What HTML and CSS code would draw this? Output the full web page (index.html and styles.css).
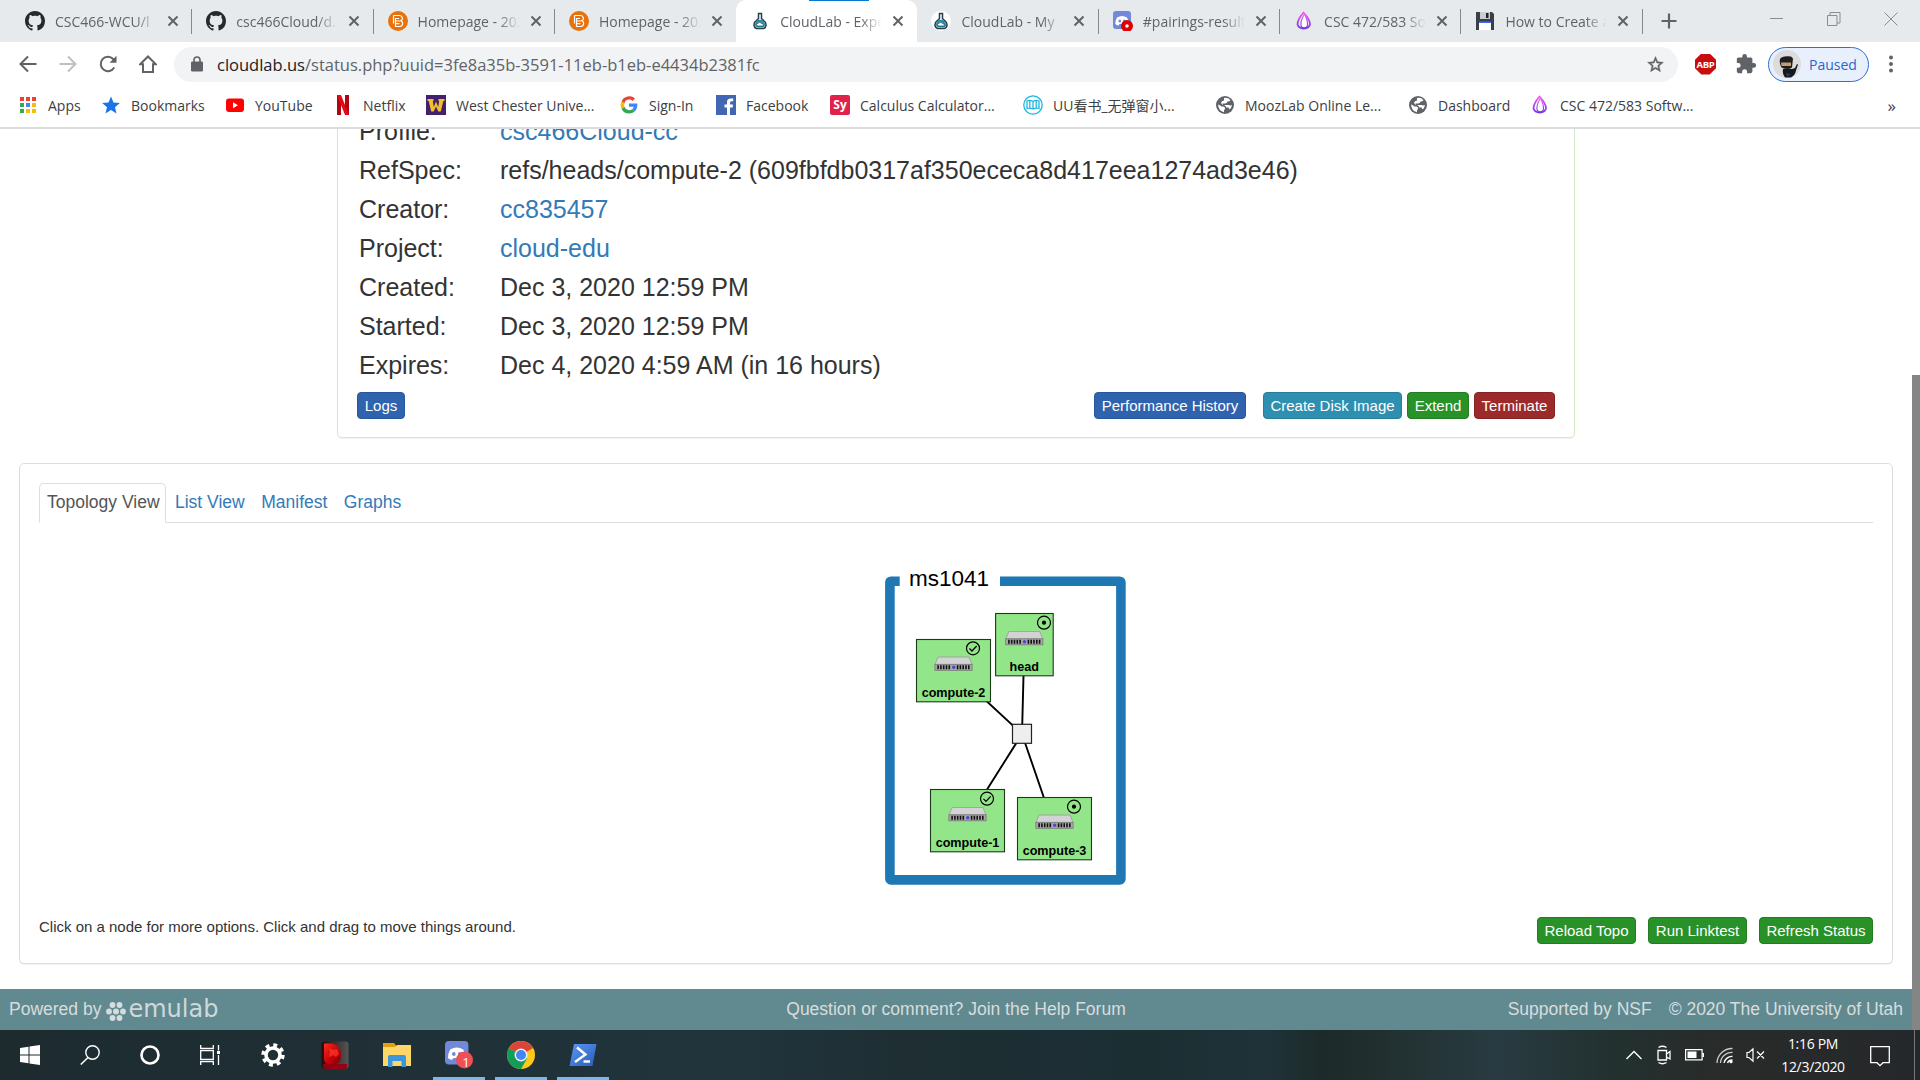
FILE: index.html
```html
<!DOCTYPE html>
<html lang="en">
<head>
<meta charset="utf-8">
<title>CloudLab - Experiment Status</title>
<link rel="stylesheet" href="styles.css">
</head>
<body>
<svg class="defs" width="0" height="0">
  <defs>
    <linearGradient id="dropg" x1="0" y1="0" x2="0" y2="1"><stop offset="0" stop-color="#f25cf0"/><stop offset="1" stop-color="#7a35e8"/></linearGradient>
    <linearGradient id="redg" x1="0" y1="0" x2="1" y2="1"><stop offset="0" stop-color="#ff2a20"/><stop offset=".6" stop-color="#c00008"/><stop offset="1" stop-color="#700"/></linearGradient>
    <linearGradient id="darkg" x1="0" y1="0" x2="1" y2="0"><stop offset="0" stop-color="#2a0a0a"/><stop offset="1" stop-color="#555"/></linearGradient>
    <linearGradient id="psg" x1="0" y1="0" x2="1" y2="1"><stop offset="0" stop-color="#5a96f5"/><stop offset="1" stop-color="#2a5db8"/></linearGradient>
    <symbol id="github" viewBox="0 0 16 16"><path fill="#24292e" d="M8 0C3.58 0 0 3.58 0 8c0 3.54 2.29 6.53 5.47 7.59.4.07.55-.17.55-.38 0-.19-.01-.82-.01-1.49-2.01.37-2.53-.49-2.69-.94-.09-.23-.48-.94-.82-1.13-.28-.15-.68-.52-.01-.53.63-.01 1.08.58 1.23.82.72 1.21 1.87.87 2.33.66.07-.52.28-.87.51-1.07-1.78-.2-3.64-.89-3.64-3.95 0-.87.31-1.59.82-2.15-.08-.2-.36-1.02.08-2.12 0 0 .67-.21 2.2.82.64-.18 1.32-.27 2-.27s1.36.09 2 .27c1.53-1.04 2.2-.82 2.2-.82.44 1.1.16 1.92.08 2.12.51.56.82 1.27.82 2.15 0 3.07-1.87 3.75-3.65 3.95.29.25.54.73.54 1.48 0 1.07-.01 1.93-.01 2.2 0 .21.15.46.55.38A8.01 8.01 0 0 0 16 8c0-4.42-3.58-8-8-8z"/></symbol>
    <symbol id="brand" viewBox="0 0 20 20"><circle cx="10" cy="10" r="10" fill="#e8710a"/><path d="M5.5 4.5h6a2.7 2.7 0 0 1 1.2 5.2 3 3 0 0 1-.9 5.8H7.500V7.500h3.500M5.500 4.500v8M7.500 10h4.500M7.500 12.700h4" fill="none" stroke="#fff" stroke-width="1.200"/></symbol>
    <symbol id="flask" viewBox="0 0 20 20"><circle cx="10" cy="10" r="10" fill="#fff"/><path d="M7.800 2.500h4.400M8.500 2.500v5L4.600 11.500q-1.800 4.500 1.800 6h7.200q3.600-1.500 1.800-6L11.500 7.500v-5z" fill="#fff" stroke="#25404a" stroke-width="1.500"/><path d="M7.800 8.800h4.400l2.500 3.500q1 3.200-1.400 4.300H6.700q-2.400-1.100-1.400-4.300z" fill="#258fb0"/><path d="M7 15q-1.300-1.800.6-2.500 2-2.300 4.200 0 2.400.4 1.500 2.500z" fill="#fff" stroke="#25404a" stroke-width=".7"/></symbol>
    <symbol id="discord" viewBox="0 0 20 20"><rect width="18" height="18" rx="3" fill="#7289da"/><path d="M4 6.500Q9 3.500 14 6.500q2 3 1.700 6.500-2 1.500-3.200 1.500L11.500 13h-5l-1 1.500q-1.500 0-3.200-1.500Q2.300 9.500 4 6.500z" fill="#fff"/><ellipse cx="6.800" cy="10" rx="1.400" ry="1.600" fill="#7289da"/><ellipse cx="11.300" cy="10" rx="1.400" ry="1.600" fill="#7289da"/></symbol>
    <symbol id="drop" viewBox="0 0 20 20"><path d="M9.500 1.500Q3.500 8.500 3.500 13.500a6.500 5.500 0 0 0 12.500 0Q16 8.500 9.500 1.500z" fill="none" stroke="url(#dropg)" stroke-width="1.800"/><path d="M10.500 3q-3.800 6.500-3.600 10.500a3.300 3.300 0 0 0 6.600 0Q13.600 9 10.500 3z" fill="#fff" stroke="url(#dropg)" stroke-width="1.100"/></symbol>
    <symbol id="globe" viewBox="0 0 20 20"><circle cx="10" cy="10" r="9" fill="#5f6368"/><path d="M3 9.500q2 .5 3.500 2h2q2 .5 1.500 2.500-1.500 1-1 3.200Q3.500 16 3 9.500zM9 3q4-.8 6.500 2.200-1.500 1.700-3 1.300-.5 2-2.500 2H7.500l.500 1.500h5.500q1.500.8 3.500 0-.5 3-2.500 4.500l-1-2h-2.200q-.8-2.800-3.800-2.800L6 8q.5-2.500 3-2.500z" fill="#fff"/></symbol>
    <symbol id="x" viewBox="0 0 12 12"><path d="M1.500 1.500l9 9M10.500 1.500l-9 9" stroke="#5f6368" stroke-width="2" fill="none"/></symbol>
    <symbol id="server" viewBox="0 0 38 15" overflow="visible"><path d="M3.500 .5h31L37.500 8H.5z" fill="#d3d3d6" stroke="#9a9a9a" stroke-width=".8"/><rect x=".4" y="7.800" width="37.200" height="6" fill="#a8a8a8" stroke="#777" stroke-width=".8"/><path d="M2.800 10.800H16.500M22.300 10.800h13" stroke="#111" stroke-width="4" stroke-dasharray="1.600 1.200"/><circle cx="19.200" cy="10.800" r="1.700" fill="#4548d8"/></symbol>
    <symbol id="ready" viewBox="-8 -8 16 16"><circle r="6.500" fill="none" stroke="#000" stroke-width="1.200"/><path d="M-3.500 .2l2.500 2.500 4.700-5" fill="none" stroke="#000" stroke-width="1.300"/></symbol>
    <symbol id="booted" viewBox="-8 -8 16 16"><circle r="6.500" fill="none" stroke="#000" stroke-width="1.200"/><circle r="2.100"/></symbol>
  </defs>
</svg>

<div class="screen">
  <header class="browser">
    <div class="strip">
      <div class="accent"></div>
      <div class="tab"><svg class="fav"><use href="#github"/></svg><span class="title t0">CSC466-WCU/l</span><svg class="close"><use href="#x"/></svg></div>
      <div class="tab"><svg class="fav"><use href="#github"/></svg><span class="title t1">csc466Cloud/d.</span><svg class="close"><use href="#x"/></svg></div>
      <div class="tab"><svg class="fav"><use href="#brand"/></svg><span class="title">Homepage - 202</span><svg class="close"><use href="#x"/></svg></div>
      <div class="tab bare"><svg class="fav"><use href="#brand"/></svg><span class="title">Homepage - 202</span><svg class="close"><use href="#x"/></svg></div>
      <div class="tab active"><svg class="fav"><use href="#flask"/></svg><span class="title">CloudLab - Expe</span><svg class="close"><use href="#x"/></svg></div>
      <div class="tab"><svg class="fav"><use href="#flask"/></svg><span class="title">CloudLab - My</span><svg class="close"><use href="#x"/></svg></div>
      <div class="tab"><svg class="fav" viewBox="0 0 20 20"><use href="#discord" width="20" height="20"/><circle cx="14" cy="15" r="6" fill="#e00000"/><circle cx="14" cy="15" r="1.800" fill="#fff"/></svg><span class="title">#pairings-result</span><svg class="close"><use href="#x"/></svg></div>
      <div class="tab"><svg class="fav"><use href="#drop"/></svg><span class="title">CSC 472/583 Sof</span><svg class="close"><use href="#x"/></svg></div>
      <div class="tab"><svg class="fav" viewBox="0 0 20 20"><path d="M1 1h16l2 2v16H1z" fill="#3b3f48"/><path d="M5 1h10v7H5z" fill="#c9ccd2"/><path d="M11 2h2.500v5H11z" fill="#222"/><path d="M4 11h12v8H4z" fill="#fff"/><path d="M4 10.500h12v1.500H4z" fill="#3d6ee8"/></svg><span class="title">How to Create a</span><svg class="close"><use href="#x"/></svg></div>
      <svg class="plus" viewBox="0 0 16 16"><path d="M8 .5v15M.5 8h15" stroke="#5f6368" stroke-width="2.200"/></svg>
      <div class="wincontrols">
        <svg width="14" height="14"><path d="M0 6.500h13" stroke="#8a8c8e"/></svg>
        <svg width="14" height="14"><path d="M.5 3.500h9.500v10H.5zM3 3.500v-3h10v10.500h-3" fill="none" stroke="#8a8c8e"/></svg>
        <svg width="14" height="14"><path d="M.5 .5l13 13M13.500 .5l-13 13" stroke="#8a8c8e"/></svg>
      </div>
    </div>

    <div class="toolbar">
      <svg width="18" height="18" viewBox="0 0 18 18"><path d="M17.500 9H2M9 1.500L1.500 9 9 16.500" fill="none" stroke="#5f6368" stroke-width="2"/></svg>
      <svg width="18" height="18" viewBox="0 0 18 18"><path d="M.5 9H16M9 1.500L16.500 9 9 16.500" fill="none" stroke="#bdbfc2" stroke-width="2"/></svg>
      <svg width="18" height="18" viewBox="0 0 18 18"><path d="M15.200 12.500A7.200 7.200 0 1 1 14.200 4L16 5.800" fill="none" stroke="#5f6368" stroke-width="2"/><path d="M17.500 .8v7H10.500z" fill="#5f6368"/></svg>
      <svg width="18" height="18" viewBox="0 0 18 18"><path d="M1.200 9.200L9 1.500l7.800 7.700H14v7.800H4V9.200z" fill="none" stroke="#5f6368" stroke-width="2"/></svg>
      <div class="omnibox">
        <svg width="12" height="16" viewBox="0 0 12 16"><rect y="5.500" width="12" height="10" rx="1.300" fill="#5f6368"/><path d="M3 6V4a3 3 0 0 1 6 0v2" fill="none" stroke="#5f6368" stroke-width="1.600"/></svg>
        <span class="url"><b>cloudlab.us</b>/status.php?uuid=3fe8a35b-3591-11eb-b1eb-e4434b2381fc</span>
        <svg width="19" height="19" viewBox="0 0 24 24"><path d="M22 9.240l-7.190-.62L12 2 9.190 8.630 2 9.240l5.460 4.730L5.820 21 12 17.270 18.180 21l-1.630-7.030L22 9.240zM12 15.400l-3.760 2.270 1-4.280-3.320-2.880 4.380-.38L12 6.100l1.710 4.040 4.380.38-3.320 2.880 1 4.280L12 15.400z" fill="#5f6368" stroke="#5f6368" stroke-width=".6"/></svg>
      </div>
      <div class="abp">ABP</div>
      <svg class="puzzle" width="22" height="22" viewBox="0 0 24 24"><path fill="#5f6368" d="M20.500 11H19V7c0-1.100-.9-2-2-2h-4V3.500a2.500 2.500 0 0 0-5 0V5H4c-1.100 0-2 .9-2 2v3.800h1.500a2.700 2.700 0 0 1 0 5.400H2V20c0 1.100.9 2 2 2h3.800v-1.500a2.700 2.700 0 0 1 5.400 0V22H17c1.100 0 2-.9 2-2v-4h1.500a2.500 2.500 0 0 0 0-5z"/></svg>
      <div class="profile"><svg width="28" height="28" viewBox="0 0 28 28"><circle cx="14" cy="14" r="14" fill="#dcdcdc"/><path d="M7 9Q9 5.500 18 6.500l2 2-1 9q-4 3-10.500 0Q6 13 7 9z" fill="#1e1e20"/><path d="M8 12.500h10v3.500H8.500z" fill="#c89a72"/><path d="M10 19h9l3-1 2-4 1 .5-2 6q-1 5-5 7h-6q-3-4-2-8.500z" fill="#17181c"/><path d="M13 23l5 1.500-4 2z" fill="#2c3d67"/></svg><span>Paused</span></div>
      <svg class="dots" width="6" height="18" viewBox="0 0 6 18"><g fill="#5f6368"><circle cx="3" cy="2.500" r="2"/><circle cx="3" cy="9" r="2"/><circle cx="3" cy="15.500" r="2"/></g></svg>
    </div>

    <nav class="bookmarks">
      <div class="bm apps"><svg viewBox="0 0 20 20"><g fill="#ea4335"><path d="M2 2h4v4H2zM8 2h4v4H8zM14 2h4v4h-4z"/></g><path d="M2 8h4v4H2zM2 14h4v4H2z" fill="#34a853"/><path d="M8 8h4v4H8z" fill="#4285f4"/><path d="M14 8h4v4h-4zM8 14h4v4H8zM14 14h4v4h-4z" fill="#fbbc05"/></svg><span>Apps</span></div>
      <div class="bm starred"><svg viewBox="0 0 20 20"><path d="M10 1.500l2.500 6 6.300.5-4.800 4.200 1.500 6.300L10 15.100 4.500 18.500 6 12.200 1.200 8l6.300-.5z" fill="#1a73e8"/></svg><span>Bookmarks</span></div>
      <div class="bm yt"><svg viewBox="0 0 20 20"><rect x="1" y="3.500" width="18" height="13.500" rx="3" fill="#f00"/><path d="M8 7.200l5 3-5 3z" fill="#fff"/></svg><span>YouTube</span></div>
      <div class="bm nf"><svg viewBox="0 0 20 20"><path d="M4 0h4v20H4zM12 0h4v20h-4z" fill="#b00610"/><path d="M4 0h4l8 20h-4z" fill="#e50914"/></svg><span>Netflix</span></div>
      <div class="bm wcu"><svg viewBox="0 0 20 20"><rect width="20" height="20" fill="#43206b"/><path d="M1.500 4h6v2H6.800l1 6L10 6.500 12.200 12l1-6h-.7V4h6v2h-1.200l-2.500 10.500h-2.500L10 11.500l-2.300 5H5.200L2.700 6H1.500z" fill="#f3bf2f"/></svg><span>West Chester Unive...</span></div>
      <div class="bm goog"><svg viewBox="0 0 48 48"><path fill="#EA4335" d="M24 11c3.300 0 6.200 1.200 8.500 3.300l5.800-5.800A20 20 0 0 0 6.200 15l6.800 5.200A11.600 11.600 0 0 1 24 11z"/><path fill="#4285F4" d="M44 24.500c0-1.500-.1-2.600-.4-3.900H24v7.600h11.200c-.5 2.600-2 4.900-4.300 6.400l6.600 5.100C41.500 36 44 30.700 44 24.500z"/><path fill="#FBBC05" d="M13 28.200a12 12 0 0 1 0-8L6.200 15a20 20 0 0 0 0 18.400z"/><path fill="#34A853" d="M24 44.500c5.400 0 10-1.800 13.500-4.800l-6.600-5.100A12.400 12.400 0 0 1 13 28.200l-6.800 5.200A20 20 0 0 0 24 44.500z"/></svg><span>Sign-In</span></div>
      <div class="bm fb"><svg viewBox="0 0 20 20"><rect width="20" height="20" fill="#4267b2"/><path d="M11 20v-7.500H8.500v-3H11V7.200Q11 3.500 14.800 3.500h2.400v2.800h-1.700q-1.500 0-1.500 1.500v1.700h3l-.4 3H14V20z" fill="#fff"/></svg><span>Facebook</span></div>
      <div class="bm sy"><i>Sy</i><span>Calculus Calculator...</span></div>
      <div class="bm uu"><svg viewBox="0 0 20 20"><circle cx="10" cy="10" r="9.200" fill="#fff" stroke="#1fb6e0" stroke-width="1.300"/><path d="M10 6.500Q7 4.500 4 6v7.500q3-1 6 .5 3-1.500 6-.5V6q-3-1.500-6 .5zM10 6.500V14M6.800 5.500V13M13.200 5.500V13" fill="none" stroke="#1fb6e0" stroke-width="1.300"/></svg><span>UU看书_无弹窗小...</span></div>
      <div class="bm mooz"><svg><use href="#globe"/></svg><span>MoozLab Online Le...</span></div>
      <div class="bm dash"><svg><use href="#globe"/></svg><span>Dashboard</span></div>
      <div class="bm csc"><svg><use href="#drop"/></svg><span>CSC 472/583 Softw...</span></div>
      <div class="more">»</div>
    </nav>
  </header>

  <main class="viewport">
    <section class="panel info">
      <dl>
        <dt>Profile:</dt><dd><a>csc466Cloud-cc</a></dd>
        <dt>RefSpec:</dt><dd>refs/heads/compute-2 (609fbfdb0317af350ececa8d417eea1274ad3e46)</dd>
        <dt>Creator:</dt><dd><a>cc835457</a></dd>
        <dt>Project:</dt><dd><a>cloud-edu</a></dd>
        <dt>Created:</dt><dd>Dec 3, 2020 12:59 PM</dd>
        <dt>Started:</dt><dd>Dec 3, 2020 12:59 PM</dd>
        <dt>Expires:</dt><dd>Dec 4, 2020 4:59 AM (in 16 hours)</dd>
      </dl>
      <div class="actions">
        <button class="btn primary logs">Logs</button>
        <button class="btn primary history">Performance History</button>
        <button class="btn teal">Create Disk Image</button>
        <button class="btn green">Extend</button>
        <button class="btn red">Terminate</button>
      </div>
    </section>

    <section class="panel topo">
      <ul class="views"><li class="on">Topology View</li><li>List View</li><li>Manifest</li><li>Graphs</li></ul>
      <svg class="graph" viewBox="880 560 260 330" width="260" height="330">
        <path d="M899.700 581.200H891Q889.900 581.200 889.900 582.300V878.700Q889.900 879.900 891 879.900H1119.700Q1120.900 879.900 1120.900 878.700V582.300Q1120.900 581.200 1119.700 581.200H1000" fill="none" stroke="#1f77b4" stroke-width="9.600" stroke-linejoin="round"/>
        <text x="909" y="586" class="site" textLength="80">ms1041</text>
        <g stroke="#000" stroke-width="1.900">
          <path d="M1022 734L1024.300 645M1022 734L953.500 670.500M1022 734L967.500 820.500M1022 734L1054.500 828.500"/>
        </g>
        <rect x="1012.500" y="724.300" width="19" height="19" fill="#eee" stroke="#222" stroke-width="1.200"/>
        <g class="node" transform="translate(1024.300 613.500)"><rect x="-28.700" width="57.600" height="62.300"/><use href="#server" x="-19" y="17.500" width="38" height="15"/><use href="#booted" x="11.700" y="1.200" width="16" height="16"/><text y="57.300">head</text></g>
        <g class="node" transform="translate(953.500 639.500)"><rect x="-37" width="74" height="62.300"/><use href="#server" x="-19" y="17" width="38" height="15"/><use href="#ready" x="11.500" y=".8" width="16" height="16"/><text y="57.300">compute-2</text></g>
        <g class="node" transform="translate(967.500 789.500)"><rect x="-37" width="74" height="62.300"/><use href="#server" x="-19" y="17.500" width="38" height="15"/><use href="#ready" x="11.500" y="1.200" width="16" height="16"/><text y="57.300">compute-1</text></g>
        <g class="node" transform="translate(1054.500 797.500)"><rect x="-37" width="74" height="62.300"/><use href="#server" x="-19" y="17" width="38" height="15"/><use href="#booted" x="11.500" y="1.200" width="16" height="16"/><text y="57.300">compute-3</text></g>
      </svg>
      <div class="bottom">
        <p>Click on a node for more options. Click and drag to move things around.</p>
        <button class="btn green">Reload Topo</button>
        <button class="btn green">Run Linktest</button>
        <button class="btn green">Refresh Status</button>
      </div>
    </section>

    <footer>
      <div class="powered">Powered by
        <svg width="20" height="19" viewBox="0 0 20 19"><g fill="#d5dcde"><circle cx="10" cy="9.500" r="3"/><circle cx="3" cy="9.500" r="2.900"/><circle cx="17" cy="9.500" r="2.900"/><circle cx="6.500" cy="3" r="2.900"/><circle cx="13.500" cy="3" r="2.900"/><circle cx="6.500" cy="16" r="2.900"/><circle cx="13.500" cy="16" r="2.900"/></g></svg>
        <span class="emulab">emulab</span>
      </div>
      <div class="question">Question or comment? Join the Help Forum</div>
      <div class="credits"><span>Supported by NSF</span><span>© 2020 The University of Utah</span></div>
    </footer>
    <div class="scrollbar"></div>
  </main>

  <div class="taskbar">
    <div class="slot"><svg width="20" height="20" viewBox="0 0 20 20"><path d="M0 3l8.500-1.300v7.800H0zM9.500 1.500L20 0v9.500H9.500zM0 10.500h8.500v7.800L0 17zM9.500 10.500H20V20L9.500 18.500z" fill="#fff"/></svg></div>
    <div class="slot"><svg width="20" height="20" viewBox="0 0 20 20"><circle cx="12.500" cy="7.500" r="6.700" fill="none" stroke="#fff" stroke-width="1.400"/><path d="M8 12.500L.8 19.500" stroke="#fff" stroke-width="1.500"/></svg></div>
    <div class="slot"><svg width="20" height="20" viewBox="0 0 20 20"><circle cx="10" cy="10" r="8.500" fill="none" stroke="#fff" stroke-width="2.600"/></svg></div>
    <div class="slot"><svg width="20" height="20" viewBox="0 0 20 20"><path d="M.7 0v3.500h12.600V0M.7 20v-3.500h12.600V20M.7 5.700h12.600v8.600H.7zM18.500 0v5.500M18.500 10v10" fill="none" stroke="#fff" stroke-width="1.300"/><path d="M17 6h3v3h-3z" fill="#fff"/></svg></div>
    <div class="slot app"><svg width="24" height="24" viewBox="0 0 24 24"><circle cx="12" cy="12" r="7" fill="none" stroke="#fff" stroke-width="3.600"/><circle cx="12" cy="12" r="9.700" fill="none" stroke="#fff" stroke-width="4" stroke-dasharray="3.800 3.818"/></svg></div>
    <div class="slot app"><svg width="28" height="28" viewBox="0 0 28 28"><rect x=".5" y=".5" width="27" height="27" rx="3" fill="url(#darkg)"/><path d="M2 23h24v3q-1 2-3 2H5q-3 0-3-3z" fill="#960010"/><path d="M3 2.500h8q9 2 9 11.500 0 7-5 9H6Q3 21 3 17z" fill="url(#redg)"/><path d="M8 7l4 2 4-1 2 5-3 3-3-2-4 2 1-5z" fill="#ff3a2a" opacity=".7"/></svg></div>
    <div class="slot app"><svg width="28" height="24" viewBox="0 0 28 24"><path d="M0 0h11l2.500 3H27v6H0z" fill="#e0a011"/><path d="M0 4h12l2-2h14v21H0z" fill="#ffd766"/><path d="M5 24V14q0-2 2-2h14q2 0 2 2v10h-4.500v-6h-9v6z" fill="#3a96dd"/></svg></div>
    <div class="slot app running"><svg width="28" height="28" viewBox="0 0 28 28"><use href="#discord" width="26" height="26"/><circle cx="19.500" cy="19" r="8.500" fill="#f04f55"/></svg><span class="badge">1</span></div>
    <div class="slot app running"><svg width="28" height="28" viewBox="0 0 28 28"><circle cx="14" cy="14" r="14" fill="#fbc81c"/><path d="M14 14L1.900 7A14 14 0 0 1 26.100 7z" fill="#db4437"/><path d="M14 14L1.900 7A14 14 0 0 0 14 28L20 17.500z" fill="#0f9d58"/><circle cx="14" cy="14" r="6.500" fill="#f1f1f1"/><circle cx="14" cy="14" r="5" fill="#4285f4"/></svg></div>
    <div class="slot app running"><svg width="28" height="22" viewBox="0 0 28 22"><path d="M5 0h22.500L23.500 22H.5z" fill="url(#psg)"/><path d="M8 3.500l8.500 7L6 18" fill="none" stroke="#fff" stroke-width="2.400"/><path d="M14.500 17.500H21" stroke="#fff" stroke-width="2.400"/></svg></div>
    <div class="tray">
      <svg width="18" height="16" viewBox="0 0 18 16"><path d="M1.500 12L9 4.500 16.500 12" fill="none" stroke="#fff" stroke-width="1.400"/></svg>
      <svg width="18" height="20" viewBox="0 0 18 20"><path d="M3 5.500h8.500v9.500H3zM11.500 9l3.500-2.500v7.500L11.500 12M3.500 2.500q4-2.500 8 0M3.500 17.500q4 2.500 8 0" fill="none" stroke="#fff" stroke-width="1.300"/></svg>
      <svg width="19" height="12" viewBox="0 0 19 12"><path d="M.6 .6h16.500v10.300H.6z" fill="none" stroke="#fff" stroke-width="1.200"/><path d="M2.500 2.500h9v6.600h-9zM17.500 4H19v4h-1.500z" fill="#fff"/></svg>
      <svg width="18" height="18" viewBox="0 0 18 18"><g fill="none" stroke="#fff" stroke-width="1.300"><path d="M1 17A15 15 0 0 1 16.500 2.500M4.500 17A11 11 0 0 1 16.500 6.500" opacity=".75"/><path d="M8 17a8 8 0 0 1 8.500-6.500M11.500 17q1-3 5-3"/></g><circle cx="15" cy="15.700" r="1.600" fill="#fff"/></svg>
      <svg width="19" height="16" viewBox="0 0 19 16"><path d="M1 5.500h2L7 1.800v12.400L3 10.500H1zM11 4.500l7 7M18 4.500l-7 7" fill="none" stroke="#fff" stroke-width="1.200"/></svg>
    </div>
    <div class="clock"><span>1:16 PM</span><span>12/3/2020</span></div>
    <svg class="notif" width="20" height="21" viewBox="0 0 20 21"><path d="M.7 .7h18.600v16H13l-3 3-3-3H.7z" fill="none" stroke="#fff" stroke-width="1.300"/></svg>
    <div class="desktop-edge"></div>
  </div>
</div>
</body>
</html>
```
FILE: styles.css
```css
* { box-sizing: border-box; }
body { margin: 0; background: #fff; font-family: "Liberation Sans", Arial, sans-serif; color: #333; overflow: hidden; }
.defs { position: absolute; }
svg { display: block; flex: none; }
.screen { width: 1920px; height: 1080px; display: flex; flex-direction: column; }

/* browser chrome */
.browser { font-family: "Open Sans", "Noto Sans CJK SC", sans-serif; height: 129px; flex: none; border-bottom: 2px solid #dadce0; }
.strip { position: relative; height: 42px; background: #e7eaed; display: flex; padding-left: 11px; }
.accent { position: absolute; left: 809px; top: 0; width: 60px; height: 1px; background: #0078d7; z-index: 2; }
.tab { position: relative; flex: none; width: 181.300px; height: 42px; padding-left: 14px; display: flex; align-items: center; }
.tab::after { content: ""; position: absolute; right: 0; top: 9px; width: 1px; height: 25px; background: #85888c; }
.tab.bare::after, .tab.active::after { display: none; }
.tab.active { background: #fff; border-radius: 10px 10px 0 0; }
.fav { width: 20px; height: 20px; }
.title { width: 103px; margin-left: 10px; font-size: 14px; white-space: nowrap; overflow: hidden; color: #5f6368; -webkit-mask-image: linear-gradient(90deg, #000 78%, transparent 99%); mask-image: linear-gradient(90deg, #000 78%, transparent 99%); }
.close { width: 12px; height: 12px; margin-left: 9px; }
.plus { width: 16px; height: 16px; margin: 13px 0 0 18px; }
.wincontrols { margin-left: auto; display: flex; gap: 43px; padding: 12px 22px 0 0; }

.toolbar { height: 44px; display: flex; align-items: center; padding: 0 25px 0 19px; gap: 22px; }
.omnibox { flex: none; width: 1504px; height: 35px; margin-left: -5px; margin-right: -5px; border-radius: 18px; background: #f1f3f4; display: flex; align-items: center; padding: 0 13px 0 17px; }
.url { flex: 1; margin-left: 14px; font-size: 16.500px; color: #5f6368; white-space: nowrap; }
.url b { font-weight: 400; color: #202124; }
.abp { width: 21px; height: 21px; background: #c70d0d; color: #fff; font: bold 9.500px/21px "Open Sans", sans-serif; text-align: center; letter-spacing: -.3px; clip-path: polygon(30% 0, 70% 0, 100% 30%, 100% 70%, 70% 100%, 30% 100%, 0 70%, 0 30%); flex: none; }
.puzzle { margin-left: -3px; }
.profile { flex: none; width: 101px; height: 35px; margin-left: -11px; border: 1.500px solid #2a70d8; border-radius: 18px; background: #e8f0fe; display: flex; align-items: center; padding-left: 4px; gap: 8px; font-size: 14px; color: #2a66cc; }
.dots { margin-left: -3px; }

.bookmarks { height: 41px; display: flex; align-items: center; padding: 0 24px 3px 18px; font-size: 14px; color: #3c4043; white-space: nowrap; }
.bm { flex: none; display: flex; align-items: center; gap: 10px; }
.bm svg, .bm i { width: 20px; height: 20px; }
.bm i { background: #e0234b; color: #fff; border-radius: 2px; font: bold 12px/19px "Open Sans", sans-serif; text-align: center; }
.apps { width: 83px; }
.starred { width: 124px; }
.yt { width: 108px; }
.nf { width: 93px; }
.wcu { width: 193px; }
.goog { width: 97px; }
.fb { width: 114px; }
.sy { width: 193px; }
.uu { width: 192px; }
.mooz { width: 193px; }
.dash { width: 122px; }
.csc { width: 180px; }
.more { margin-left: auto; font-size: 17px; }

/* page */
.viewport { position: relative; height: 901px; flex: none; overflow: hidden; padding-right: 8px; }
.scrollbar { position: absolute; right: 0; top: 246px; width: 8px; height: 655px; background: #858585; }
.panel { background: #fff; border: 1px solid #ddd; border-radius: 5px; box-shadow: 0 1px 1px rgba(0,0,0,.05); }
.info { width: 1238px; height: 329px; margin: -20px 0 0 337px; padding: 2px 19px 0; border-color: #d6e9c6; }
dl { margin: 0; padding-left: 2px; display: grid; grid-template-columns: 141px 1fr; grid-auto-rows: 39px; font-size: 25px; line-height: 39px; white-space: nowrap; }
dd { margin: 0; }
a { color: #337ab7; }
.actions { display: flex; margin-top: 7px; }
.btn { height: 27px; padding: 0; border: 1px solid; border-radius: 4px; font: 15px/24px "Liberation Sans", Arial, sans-serif; color: #fff; flex: none; }
.primary { background: #2f63ad; border-color: #28569a; }
.teal { background: #2f8fb0; border-color: #287d9b; width: 139px; }
.green { background: #289228; border-color: #207e20; }
.red { background: #9d2a2a; border-color: #872222; width: 81px; }
.logs { width: 48px; margin-right: auto; }
.history { width: 152px; margin-right: 17px; }
.actions .green { width: 62px; margin: 0 5px; }

.topo { width: 1874px; height: 501px; margin: 25px 0 0 19px; padding: 19px; display: flex; flex-direction: column; }
.views { list-style: none; margin: 0; padding: 0; height: 40px; display: flex; border-bottom: 1px solid #ddd; font-size: 17.500px; line-height: 37px; }
.views li { height: 40px; margin-right: 2.500px; padding: 0 6px; border: 1px solid transparent; color: #337ab7; }
.views .on { width: 127px; margin-right: 2px; padding: 0 0 0 7px; border-color: #ddd; border-bottom-color: #fff; border-radius: 5px 5px 0 0; color: #555; background: #fff; }
.graph { margin: 37px 0 0 841px; }
.site { font: 22.500px "Liberation Sans", sans-serif; fill: #000; }
.node rect { fill: #92e588; stroke: #1d3a1d; stroke-width: 1.100px; }
.node text { font: bold 12.600px "Liberation Sans", sans-serif; fill: #000; text-anchor: middle; }
.bottom { display: flex; margin-top: 27px; }
.bottom p { margin: 0 auto 0 0; font-size: 15px; line-height: 20px; }
.bottom .btn { width: 99px; margin-left: 12px; }
.bottom .btn:last-child { width: 114px; }

footer { display: grid; grid-template-columns: 1fr auto 1fr; align-items: center; height: 41px; margin-top: 25px; padding: 0 9px; margin-right: -8px; padding-right: 17px; background: #608a90; color: #d9dcdd; font-size: 17.500px; }
.powered, .question, .credits { height: 41px; line-height: 40px; display: flex; }
.powered svg { margin: 13px 0 0 5px; }
.emulab { font: 24px/41px "DejaVu Sans", sans-serif; margin-left: 2px; color: #cfd8da; }
.credits { justify-content: flex-end; gap: 17px; }

/* taskbar */
.taskbar { height: 50px; flex: none; display: flex; align-items: center; color: #fff; background: linear-gradient(90deg, #1d2b2f 0, #21343c 38%, #1e2e33 48%, #1b2f33 60%, #1f3238 66%, #1c2a29 69%, #21302f 72%, #293b42 78%, #22312f 84%, #292b2a 90%, #25282a 100%); }
.slot { position: relative; width: 60px; height: 50px; flex: none; display: flex; align-items: center; justify-content: center; }
.app { width: 62px; left: 2px; }
.running::after { content: ""; position: absolute; left: 5px; bottom: 0; width: 52px; height: 3px; background: #76b9ed; }
.badge { position: absolute; left: 32px; top: 24px; width: 12px; text-align: center; font: 13px/17px "Open Sans", sans-serif; }
.tray { margin-left: auto; display: flex; align-items: center; gap: 12px; }
.clock { width: 70px; margin-left: 13px; display: flex; flex-direction: column; align-items: center; font: 14px/23.500px "Open Sans", sans-serif; letter-spacing: -.3px; }
.notif { margin: 2px 24px 0 22px; }
.desktop-edge { width: 6px; height: 50px; border-left: 1px solid #777; }
```
